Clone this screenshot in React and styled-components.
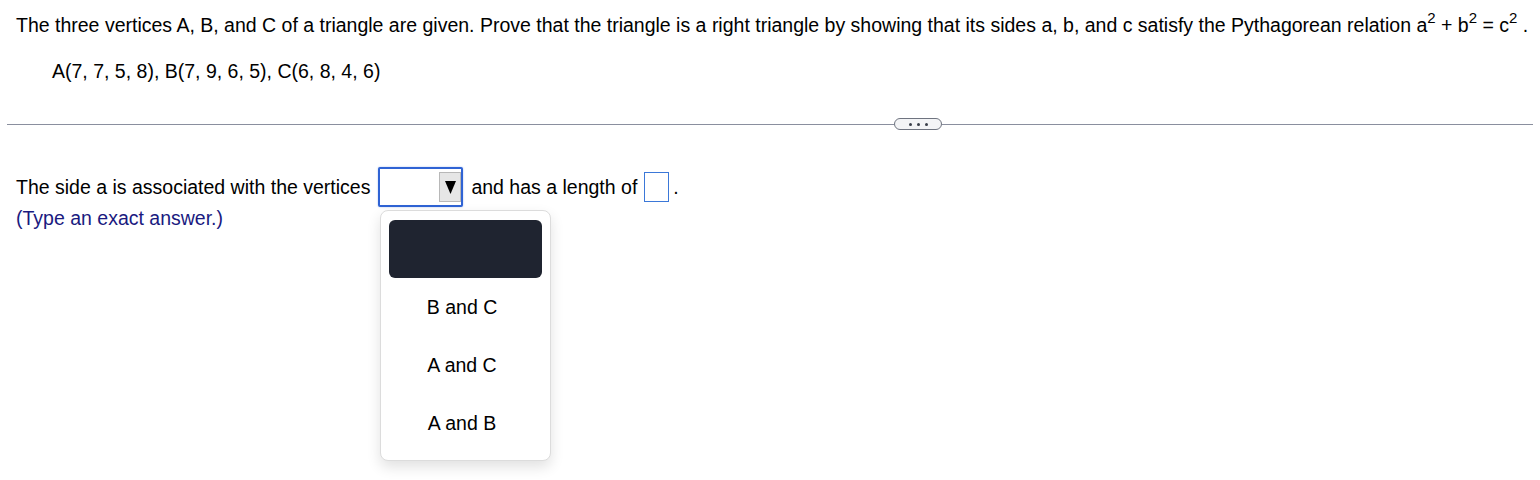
import React from "react";
import styled, { createGlobalStyle } from "styled-components";

const Global = createGlobalStyle`
  html, body { margin: 0; padding: 0; background: #ffffff; }
  body { font-family: "Liberation Sans", Arial, sans-serif; color: #000; }
`;

const Page = styled.div`
  width: 1540px;
  height: 480px;
  overflow: hidden;
  position: relative;
  font-size: 19.5px;
`;

const Prompt = styled.p`
  margin: 0;
  padding: 13px 0 0 16px;
  height: 24px;
  line-height: 24px;
  white-space: nowrap;
`;

const Sup = styled.sup`
  font-size: 15px;
  vertical-align: 9px;
  line-height: 0;
`;

const Points = styled.p`
  margin: 0;
  padding: 22px 0 0 52px;
  height: 24px;
  line-height: 24px;
`;

const Divider = styled.div`
  display: flex;
  align-items: center;
  margin: 34px 7px 0 7px;
  height: 14px;
`;

const Rule = styled.div`
  flex: ${(p) => (p.$fixed ? "0 0 887px" : "1")};
  height: 1px;
  background: #8a8f9e;
`;

const Pill = styled.div`
  box-sizing: border-box;
  width: 48px;
  height: 12px;
  border: 1px solid #6f7480;
  border-radius: 6px;
  background: #f3f4f6;
  display: flex;
  align-items: center;
  justify-content: center;
  gap: 5px;
`;

const Dot = styled.span`
  width: 3px;
  height: 3px;
  border-radius: 50%;
  background: #3a3f4a;
`;

const Answer = styled.div`
  position: relative;
  padding: 35px 0 0 16px;
`;

const Line = styled.div`
  display: flex;
  align-items: center;
  height: 42px;
  white-space: nowrap;
`;

const SelectBox = styled.div`
  box-sizing: border-box;
  width: 85px;
  height: 40px;
  margin: 0 8px 0 8px;
  border: 2px solid #2f63d4;
  border-radius: 2px;
  background: #fff;
  display: flex;
  justify-content: flex-end;
  align-items: center;
  box-shadow: 0 0 2px rgba(47, 99, 212, 0.4);
`;

const ArrowButton = styled.div`
  box-sizing: border-box;
  width: 22px;
  height: 30px;
  background: #e6e6e6;
  border: 1px solid #b8b8b8;
  display: flex;
  align-items: center;
  justify-content: center;
`;

const InputBox = styled.div`
  box-sizing: border-box;
  width: 25px;
  height: 30px;
  border: 1px solid #3b78d8;
  margin: 0 4px 0 7px;
`;

const Hint = styled.div`
  color: #1a1a80;
  line-height: 20px;
`;

const Menu = styled.div`
  position: absolute;
  left: 364px;
  top: 2px;
  box-sizing: border-box;
  width: 171px;
  height: 251px;
  background: #fff;
  border: 1px solid #dcdcdc;
  border-radius: 8px;
  box-shadow: 0 6px 14px rgba(0, 0, 0, 0.12);
  padding: 9px 8px;
  display: flex;
  flex-direction: column;
`;

const Option = styled.div`
  flex: 0 0 58px;
  border-radius: 6px;
  background: ${(p) => (p.$active ? "#1f2430" : "transparent")};
  display: flex;
  align-items: center;
  justify-content: center;
  padding-right: 7px;
  color: #000;
`;

const Anchor = styled.div`
  position: relative;
`;

export default function App() {
  return (
    <Page>
      <Global />
      <Prompt>
        The three vertices A, B, and C of a triangle are given. Prove that the triangle is a right
        triangle by showing that its sides a, b, and c satisfy the Pythagorean relation a
        <Sup>2</Sup> + b<Sup>2</Sup> = c<Sup>2</Sup> .
      </Prompt>
      <Points>A(7, 7, 5, 8), B(7, 9, 6, 5), C(6, 8, 4, 6)</Points>
      <Divider>
        <Rule $fixed />
        <Pill>
          <Dot />
          <Dot />
          <Dot />
        </Pill>
        <Rule />
      </Divider>
      <Answer>
        <Line>
          The side a is associated with the vertices
          <SelectBox>
            <ArrowButton>
              <svg width="11" height="14" viewBox="0 0 11 14">
                <polygon points="0,1 11,1 5.5,14" fill="#000" />
              </svg>
            </ArrowButton>
          </SelectBox>
          and has a length of
          <InputBox />.
        </Line>
        <Anchor>
          <Hint>(Type an exact answer.)</Hint>
          <Menu>
            <Option $active />
            <Option>B and C</Option>
            <Option>A and C</Option>
            <Option>A and B</Option>
          </Menu>
        </Anchor>
      </Answer>
    </Page>
  );
}
